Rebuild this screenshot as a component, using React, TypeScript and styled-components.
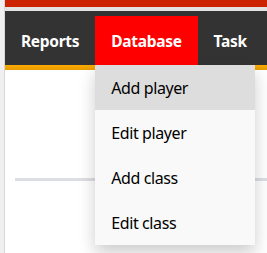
import React from 'react';
import styled, { createGlobalStyle } from 'styled-components';

const GlobalStyle = createGlobalStyle`
  html, body {
    margin: 0;
    padding: 0;
    background: #ffffff;
    font-family: 'Noto Sans', 'Open Sans', sans-serif;
    overflow: hidden;
  }
`;

const Page = styled.div`
  display: flex;
  width: 267px;
  height: 253px;
`;

const LeftRail = styled.div`
  width: 4px;
  flex: 0 0 4px;
  background: #f0f0f0;
  border-right: 1px solid #d8d8d8;
`;

const Main = styled.div`
  flex: 1;
  display: flex;
  flex-direction: column;
  min-width: 0;
`;

const TopBar = styled.div`
  height: 7px;
  background: #cc2400;
`;

const TopGap = styled.div`
  height: 4px;
  background: #e2e2e2;
`;

const NavBar = styled.nav`
  display: flex;
  align-items: flex-end;
  height: 54px;
  background: #333333;
`;

const NavItem = styled.div<{ $active?: boolean }>`
  position: relative;
  height: 49px;
  padding: 0 16px;
  display: flex;
  align-items: center;
  background: ${({ $active }) => ($active ? '#ff0000' : 'transparent')};
  color: #ffffff;
  font-size: 15.5px;
  font-weight: 700;
  letter-spacing: -0.3px;
  white-space: nowrap;
`;

const OrangeStrip = styled.div`
  height: 5px;
  background: linear-gradient(#fbab00, #e99c00);
`;

const Content = styled.div`
  flex: 1;
  padding: 108px 0 0 10px;
`;

const Rule = styled.div`
  height: 3px;
  background: #dcdee3;
`;

const Dropdown = styled.div`
  position: absolute;
  top: 100%;
  left: 0;
  width: 160px;
  background: #f9f9f9;
  box-shadow: 0 8px 16px 0 rgba(0, 0, 0, 0.2);
  letter-spacing: normal;
  z-index: 5;
`;

const DropItem = styled.div<{ $hover?: boolean }>`
  height: 45px;
  padding: 0 16px;
  display: flex;
  align-items: center;
  background: ${({ $hover }) => ($hover ? '#dddddd' : 'transparent')};
  color: #000000;
  font-size: 16px;
  font-weight: 400;
  letter-spacing: -0.4px;
`;

const menu = ['Add player', 'Edit player', 'Add class', 'Edit class'];

export default function App() {
  return (
    <>
      <GlobalStyle />
      <Page>
        <LeftRail />
        <Main>
          <TopBar />
          <TopGap />
          <NavBar>
            <NavItem>Reports</NavItem>
            <NavItem $active>
              Database
              <Dropdown>
                {menu.map((label, i) => (
                  <DropItem key={label} $hover={i === 0}>{label}</DropItem>
                ))}
              </Dropdown>
            </NavItem>
            <NavItem>Task</NavItem>
          </NavBar>
          <OrangeStrip />
          <Content>
            <Rule />
          </Content>
        </Main>
      </Page>
    </>
  );
}
